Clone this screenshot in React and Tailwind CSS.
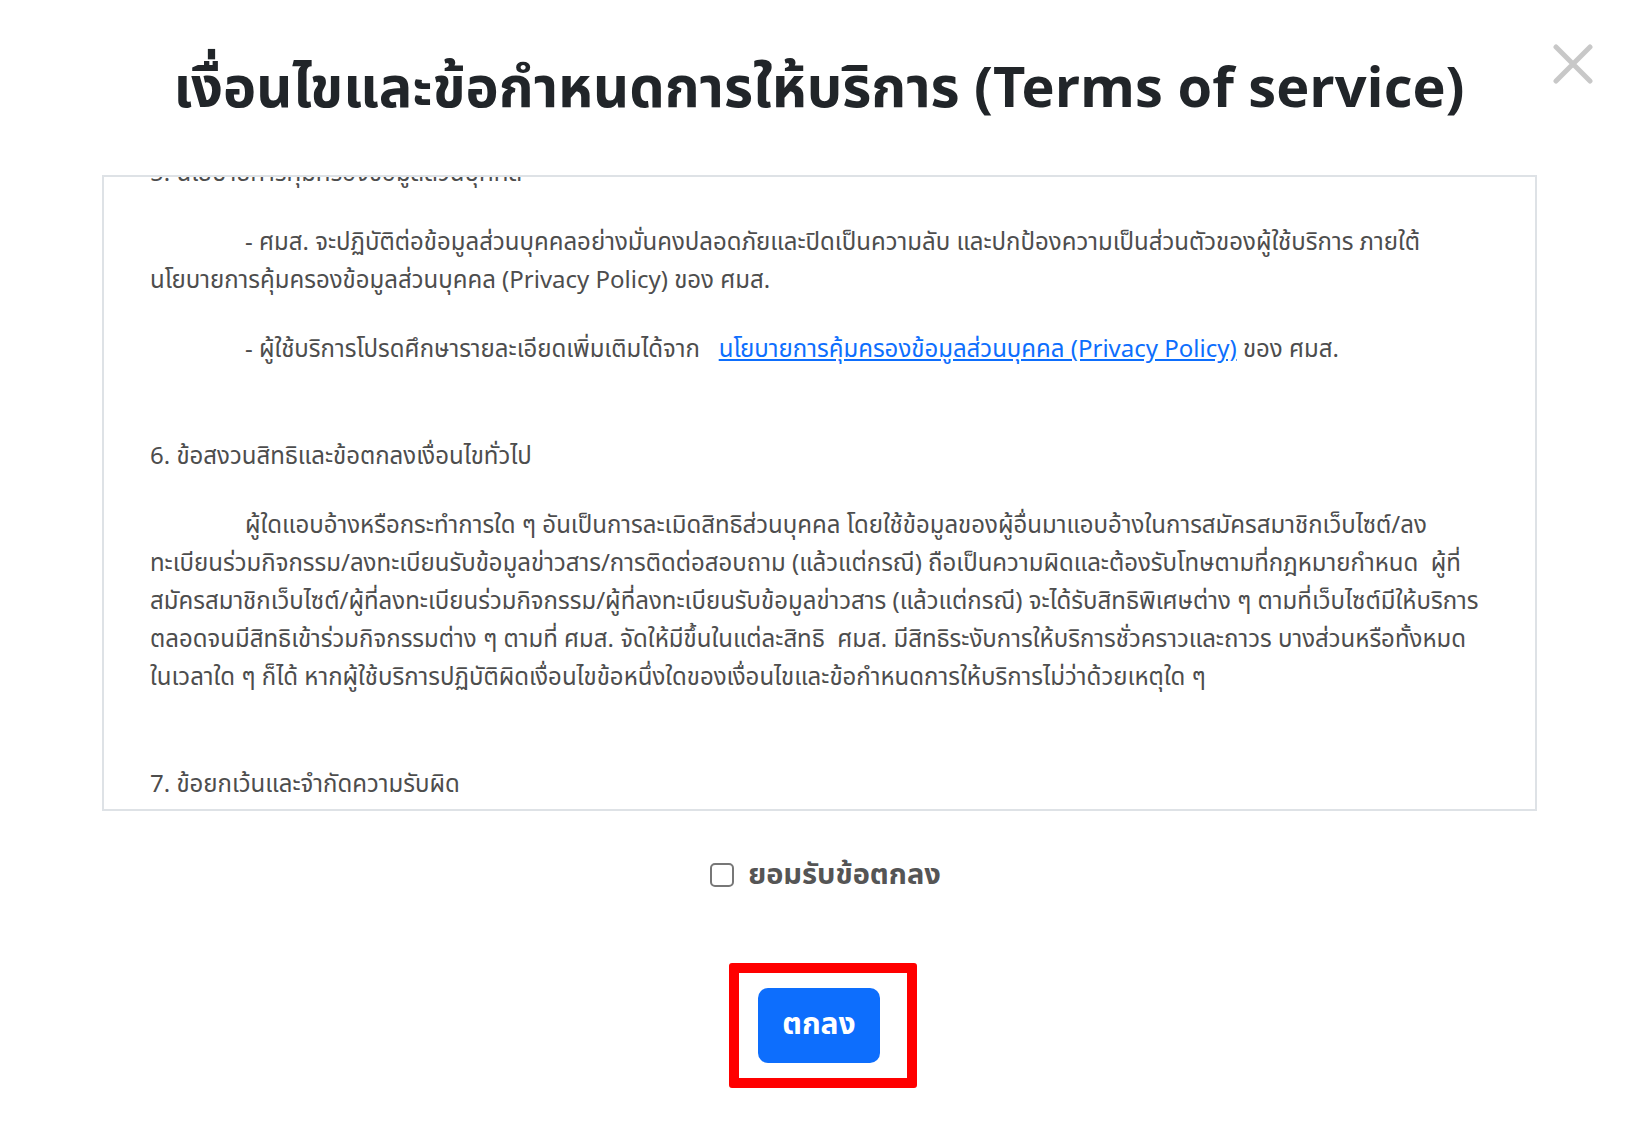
import { useState } from 'react'

const bodyFont = "font-['Noto_Sans_Thai','Noto_Sans',sans-serif]"

function CloseIcon() {
  return (
    <svg width="40" height="40" viewBox="0 0 40 40" fill="none">
      <path d="M3 3 L37 37 M37 3 L3 37" stroke="#c8c8c8" strokeWidth="5" strokeLinecap="round" />
    </svg>
  )
}

export default function App() {
  const [agreed, setAgreed] = useState(false)

  return (
    <div className={`relative min-h-[1128px] bg-white ${bodyFont}`}>
      <button className="absolute right-[33px] top-[44px]" aria-label="close">
        <CloseIcon />
      </button>

      <h1 className="pl-[12px] pt-[58px] text-center text-[56px] leading-[65px] font-bold text-[#212529]">
        เงื่อนไขและข้อกำหนดการให้บริการ (Terms of service)
      </h1>

      <div className="ml-[102px] mr-[89px] mt-[52px] h-[636px] overflow-hidden border-2 border-[#dee2e6]">
        <div className="-mt-[22px] px-[46px] text-[24px] leading-[38px] text-[#4d4d4d]">
          <p>5. นโยบายการคุ้มครองข้อมูลส่วนบุคคล</p>

          <p className="mt-[31px] indent-[95px]">
            - ศมส. จะปฏิบัติต่อข้อมูลส่วนบุคคลอย่างมั่นคงปลอดภัยและปิดเป็นความลับ และปกป้องความเป็นส่วนตัวของผู้ใช้บริการ ภายใต้
            <br />
            นโยบายการคุ้มครองข้อมูลส่วนบุคคล (Privacy Policy) ของ ศมส.
          </p>

          <p className="mt-[31px] indent-[95px]">
            - ผู้ใช้บริการโปรดศึกษารายละเอียดเพิ่มเติมได้จาก&nbsp;&nbsp;{' '}
            <a href="#" className="text-[#0d6efd] underline">
              นโยบายการคุ้มครองข้อมูลส่วนบุคคล (Privacy Policy)
            </a>{' '}
            ของ ศมส.
          </p>

          <p className="mt-[69px]">6. ข้อสงวนสิทธิและข้อตกลงเงื่อนไขทั่วไป</p>

          <p className="mt-[31px] indent-[95px] whitespace-nowrap">
            ผู้ใดแอบอ้างหรือกระทำการใด ๆ อันเป็นการละเมิดสิทธิส่วนบุคคล โดยใช้ข้อมูลของผู้อื่นมาแอบอ้างในการสมัครสมาชิกเว็บไซต์/ลง
            <br />
            ทะเบียนร่วมกิจกรรม/ลงทะเบียนรับข้อมูลข่าวสาร/การติดต่อสอบถาม (แล้วแต่กรณี) ถือเป็นความผิดและต้องรับโทษตามที่กฎหมายกำหนด&nbsp; ผู้ที่
            <br />
            สมัครสมาชิกเว็บไซต์/ผู้ที่ลงทะเบียนร่วมกิจกรรม/ผู้ที่ลงทะเบียนรับข้อมูลข่าวสาร (แล้วแต่กรณี) จะได้รับสิทธิพิเศษต่าง ๆ ตามที่เว็บไซต์มีให้บริการ
            <br />
            ตลอดจนมีสิทธิเข้าร่วมกิจกรรมต่าง ๆ ตามที่ ศมส. จัดให้มีขึ้นในแต่ละสิทธิ&nbsp; ศมส. มีสิทธิระงับการให้บริการชั่วคราวและถาวร บางส่วนหรือทั้งหมด
            <br />
            ในเวลาใด ๆ ก็ได้ หากผู้ใช้บริการปฏิบัติผิดเงื่อนไขข้อหนึ่งใดของเงื่อนไขและข้อกำหนดการให้บริการไม่ว่าด้วยเหตุใด ๆ
          </p>

          <p className="mt-[69px]">7. ข้อยกเว้นและจำกัดความรับผิด</p>
        </div>
      </div>

      <label className="mt-[44px] flex items-center justify-center gap-[14px] pl-[25px]">
        <input
          type="checkbox"
          checked={agreed}
          onChange={(e) => setAgreed(e.target.checked)}
          className="h-[24px] w-[24px] appearance-none rounded-[5px] border-2 border-[#777777] bg-white checked:bg-[#0d6efd]"
        />
        <span className="text-[29px] leading-[40px] font-bold text-[#555555]">ยอมรับข้อตกลง</span>
      </label>

      <div className="mt-[68px] flex justify-center pl-[20px]">
        <div className="rounded-[3px] border-[10px] border-[#ff0000] pb-[15px] pl-[19px] pr-[27px] pt-[15px]">
          <button className="h-[75px] w-[122px] rounded-[10px] bg-[#0d6efd] text-[30px] font-bold text-white">
            ตกลง
          </button>
        </div>
      </div>
    </div>
  )
}
